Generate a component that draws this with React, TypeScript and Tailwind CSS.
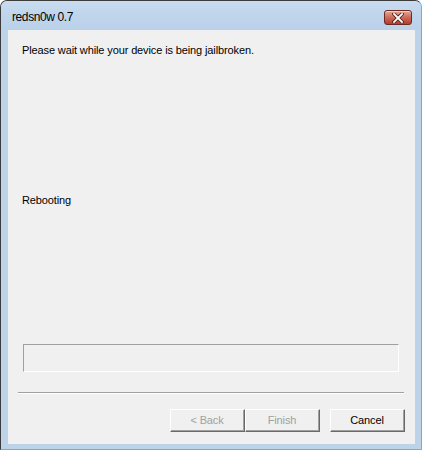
export default function App() {
  const font = { fontFamily: '"Liberation Sans", Arial, sans-serif' };
  return (
    <div className="w-[422px] h-[450px] bg-white" style={font}>
      <div className="w-full h-full flex flex-col rounded-t-[7px] border-t border-l border-[#3b3b3b] border-r border-b border-r-[#35c8e8] border-b-[#35c8e8] bg-[#bcd3ea] overflow-hidden">
        {/* title bar */}
        <div className="h-[29px] shrink-0 flex items-start bg-gradient-to-b from-[#c9dcf0] via-[#bfd5ec] to-[#bad1ea] pl-[11px] pr-[9px]">
          <span className="mt-[9px] text-[12px] leading-[14px] tracking-[-0.4px] text-black flex-1">redsn0w 0.7</span>
          <div className="mt-[9px] w-[28px] h-[15px] rounded-[3px] border border-[#6e2a22] bg-gradient-to-b from-[#e3a898] via-[#cc6a58] to-[#b43b2a] flex items-center justify-center shadow-[inset_0_1px_0_rgba(255,255,255,0.5)]">
            <svg width="12" height="10" viewBox="0 0 12 10">
              <path d="M2 1 L10 9 M10 1 L2 9" stroke="#4a1e18" strokeWidth="3.4" strokeLinecap="square" />
              <path d="M2 1 L10 9 M10 1 L2 9" stroke="#ffffff" strokeWidth="1.8" strokeLinecap="square" />
            </svg>
          </div>
        </div>
        {/* client area */}
        <div className="flex-1 flex px-[6px] pl-[7px] pb-[5px]">
          <div className="flex-1 flex flex-col bg-[#f0f0f0] text-[11px] tracking-[-0.12px] text-black pb-[12px]">
            <p className="mt-[14px] ml-[14px] h-[13px] leading-[13px]">
              Please wait while your device is being jailbroken.
            </p>
            <p className="mt-[137px] ml-[14px] h-[13px] leading-[13px]">Rebooting</p>
            <div className="mt-[137px] ml-[15px] w-[376px] h-[28px] border border-t-[#a0a0a0] border-l-[#a0a0a0] border-r-white border-b-white bg-[#f0f0f0]" />
            <div className="mt-[20px] ml-[10px] w-[386px] h-[2px] border-t border-t-[#a0a0a0] border-b border-b-white" />
            <div className="mt-[15px] flex justify-end pr-[10px]">
              <WinButton label="< Back" disabled />
              <WinButton label="Finish" disabled />
              <div className="w-[10px]" />
              <WinButton label="Cancel" />
            </div>
          </div>
        </div>
      </div>
    </div>
  );
}

function WinButton({ label, disabled }: { label: string; disabled?: boolean }) {
  return (
    <div className="w-[75px] h-[23px] border border-t-white border-l-white border-r-[#696969] border-b-[#696969] bg-[#f0f0f0]">
      <div className="w-full h-full border-r border-b border-[#a0a0a0] flex items-center justify-center">
        <span className={`text-[11px] leading-[13px] ${disabled ? "text-[#a0a0a0]" : "text-black"}`}>{label}</span>
      </div>
    </div>
  );
}
